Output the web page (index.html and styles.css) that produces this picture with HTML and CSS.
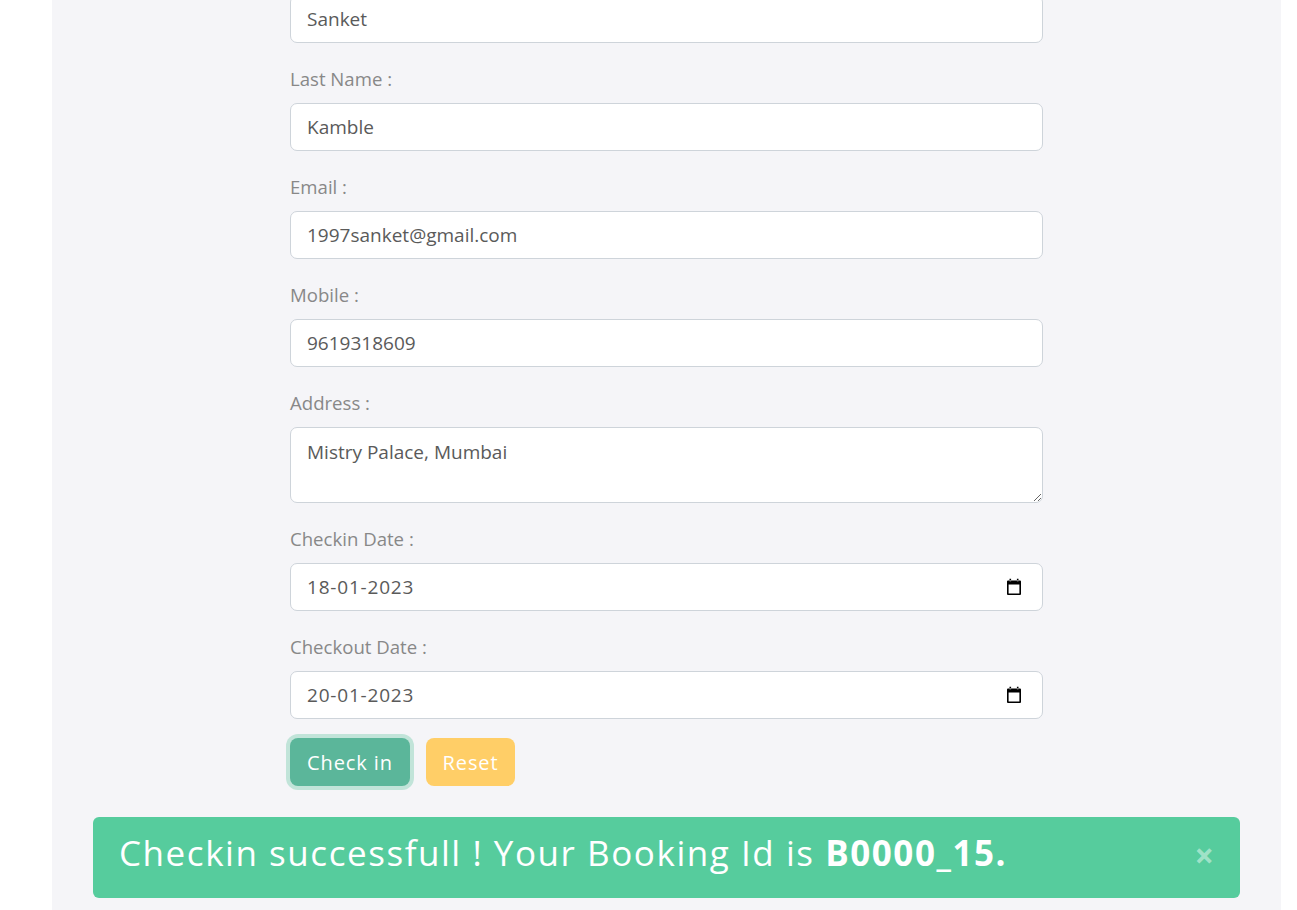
FILE: index.html
```html
<!DOCTYPE html>
<html lang="en">
<head>
<meta charset="utf-8">
<title>Checkin</title>
<link rel="stylesheet" href="styles.css">
</head>
<body>
<div class="panel">
  <form class="form">
    <div class="group first">
      <input class="control" type="text" value="Sanket">
    </div>
    <div class="group">
      <label class="label">Last Name :</label>
      <input class="control" type="text" value="Kamble">
    </div>
    <div class="group">
      <label class="label">Email :</label>
      <input class="control" type="text" value="1997sanket@gmail.com">
    </div>
    <div class="group">
      <label class="label">Mobile :</label>
      <input class="control" type="text" value="9619318609">
    </div>
    <div class="group">
      <label class="label">Address :</label>
      <textarea class="control area" rows="2">Mistry Palace, Mumbai</textarea>
    </div>
    <div class="group">
      <label class="label">Checkin Date :</label>
      <div class="control date">
        <span class="date-text">18-01-2023</span>
        <svg class="cal" width="18" height="18" viewBox="0 0 18 18"><path d="M3 2.5h12a1 1 0 0 1 1 1V16a1 1 0 0 1-1 1H3a1 1 0 0 1-1-1V3.5a1 1 0 0 1 1-1z M3.6 6.4V15.4H14.4V6.4z M4.5 0.8h1.6v2.4H4.5z M11.9 0.8h1.6v2.4h-1.6z" fill="#000" fill-rule="evenodd"/></svg>
      </div>
    </div>
    <div class="group last">
      <label class="label">Checkout Date :</label>
      <div class="control date">
        <span class="date-text">20-01-2023</span>
        <svg class="cal" width="18" height="18" viewBox="0 0 18 18"><path d="M3 2.5h12a1 1 0 0 1 1 1V16a1 1 0 0 1-1 1H3a1 1 0 0 1-1-1V3.5a1 1 0 0 1 1-1z M3.6 6.4V15.4H14.4V6.4z M4.5 0.8h1.6v2.4H4.5z M11.9 0.8h1.6v2.4h-1.6z" fill="#000" fill-rule="evenodd"/></svg>
      </div>
    </div>
    <div class="buttons">
      <button type="button" class="btn btn-primary">Check in</button>
      <button type="button" class="btn btn-warning">Reset</button>
    </div>
  </form>
  <div class="alert">
    <span class="alert-text">Checkin successfull ! Your Booking Id is <b>B0000_15.</b></span>
    <span class="close">&#215;</span>
  </div>
</div>
</body>
</html>
```
FILE: styles.css
```css
html, body {
  margin: 0;
  padding: 0;
  background: #ffffff;
  height: 100%;
  overflow: hidden;
}
.panel {
  margin-left: 52px;
  width: 1229px;
  min-height: 1000px;
  background: #f5f5f8;
  box-sizing: border-box;
  padding: 0 41px;
}
.form {
  margin-top: -5px;
  padding-left: 197px;
  width: 753px;
  font-family: "Open Sans", "Noto Sans", sans-serif;
}
.group {
  margin-bottom: 22px;
}
.group.last {
  margin-bottom: 19px;
}
.label {
  display: block;
  font-size: 18.6px;
  line-height: 27px;
  color: #888888;
  margin-bottom: 11px;
}
.control {
  display: block;
  box-sizing: border-box;
  width: 753px;
  height: 48px;
  margin: 0;
  padding: 8px 16px;
  font-family: "Open Sans", "Noto Sans", sans-serif;
  font-size: 19px;
  line-height: 32px;
  color: #5a5a5a;
  background: #ffffff;
  border: 1px solid #ced4da;
  border-radius: 7px;
  outline: none;
}
.area {
  height: 76px;
  resize: vertical;
}
.date {
  display: flex;
  align-items: center;
  justify-content: space-between;
  padding-right: 19px;
}
.date-text {
  letter-spacing: 0.8px;
}
.cal {
  display: block;
}
.buttons {
  display: flex;
  gap: 16px;
  height: 48px;
  align-items: center;
}
.btn {
  height: 48px;
  border: none;
  border-radius: 8px;
  color: #ffffff;
  font-family: "Open Sans", "Noto Sans", sans-serif;
  font-size: 20px;
  letter-spacing: 0.9px;
  padding: 0;
}
.btn-primary {
  width: 120px;
  background: #5bb69a;
  box-shadow: 0 0 0 4px #c1e4d9;
}
.btn-warning {
  width: 89px;
  background: #ffce67;
}
.alert {
  margin-top: 31px;
  height: 81px;
  box-sizing: border-box;
  background: #56cc9d;
  border-radius: 6px;
  display: flex;
  align-items: center;
  justify-content: space-between;
  padding: 0 26px 0 26px;
  color: #ffffff;
  font-family: "Open Sans", "Noto Sans", sans-serif;
}
.alert-text {
  font-size: 35px;
  line-height: 40px;
  letter-spacing: 1.55px;
  margin-top: -9px;
}
.alert-text b {
  font-weight: 700;
}
.close {
  font-size: 34px;
  font-weight: 700;
  color: rgba(255, 255, 255, 0.45);
  line-height: 1;
  margin-top: -6px;
}
```
